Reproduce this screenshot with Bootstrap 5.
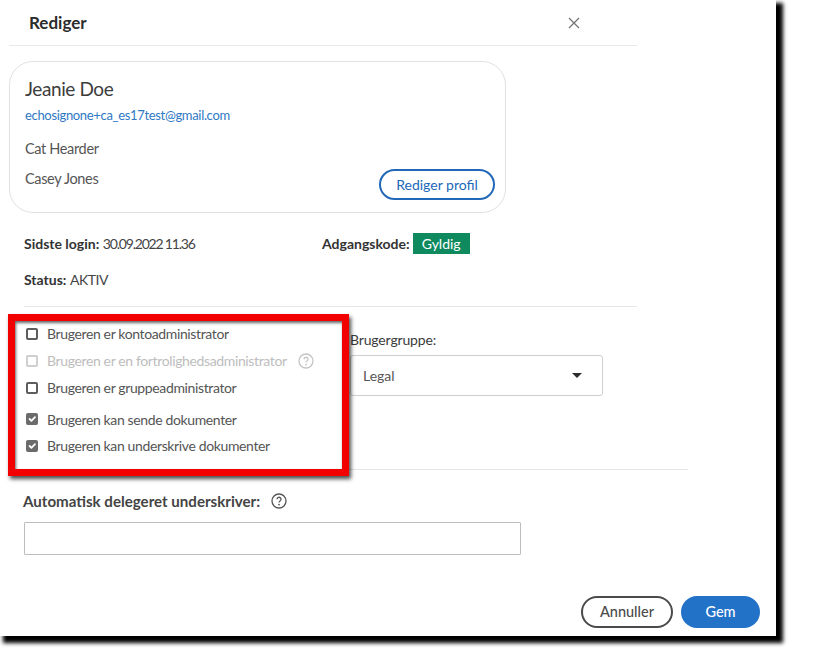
<!DOCTYPE html>
<html lang="da">
<head>
  <meta charset="UTF-8">
  <meta name="viewport" content="width=device-width, initial-scale=1.0">
  <title>Rediger</title>
  <link href="https://cdn.jsdelivr.net/npm/bootstrap@5.3.0/dist/css/bootstrap.min.css" rel="stylesheet">
  <style>
    body {
      background: #fff;
      color: #4b4b4b;
      font-family: "Lato", "Open Sans", sans-serif;
      font-size: 14px;
      min-height: 649px;
    }
    .edit-window {
      position: relative;
      width: 776px;
      height: 636px;
      background: #fff;
      box-shadow: 5px 5px 4px 2px #000;
    }
    .edit-head {
      width: 628px;
      height: 46px;
      margin-left: 9px;
      padding: 0 57px 0 20px;
      border-bottom: 1px solid #e9e9e9;
    }
    .edit-title {
      font-size: 17px;
      font-weight: 700;
      color: #2c2c2c;
    }
    .profile-box {
      width: 497px;
      height: 152px;
      margin: 15px 0 0 9px;
      padding: 15px 10px 12px 15px;
      border: 1px solid #e1e1e1;
      border-radius: 24px;
    }
    .profile-name {
      font-size: 19px;
      line-height: 24px;
      color: #3c3c3c;
      letter-spacing: -0.4px;
    }
    .profile-mail {
      font-size: 13px;
      line-height: 18px;
      margin-top: 5px;
      color: #2f79c4;
      letter-spacing: -0.33px;
    }
    .profile-line {
      font-size: 14.5px;
      line-height: 20px;
      margin-top: 15px;
      color: #555;
      letter-spacing: -0.35px;
    }
    .profile-line + .profile-line { margin-top: 10px; }
    .btn.btn-profile {
      width: 116px;
      height: 31px;
      padding: 0;
      font-size: 14px;
      color: #2168b8;
      border: 2px solid #2168b8;
      background: #fff;
    }
    .info-row {
      margin-left: 24px;
      line-height: 20px;
      color: #444;
    }
    .info-row b { color: #333; }
    .info-top { height: 20px; margin-top: 21px; }
    .info-status { margin-top: 16px; }
    .info-value { letter-spacing: -0.5px; }
    .info-date { letter-spacing: -1.2px; }
    .info-left { width: 298px; }
    .pass-badge {
      width: 57px;
      height: 21px;
      margin: 0 0 2px 3px;
      background: #0f8a5f;
      color: #fff;
      font-size: 14px;
      font-weight: 400;
      line-height: 21px;
      padding: 0;
      border-radius: 0;
    }
    .rule-a {
      width: 613px;
      height: 1px;
      margin: 16px 0 0 24px;
      background: #e6e6e6;
    }
    .perm-row {
      height: 155px;
      margin-top: 7px;
    }
    .perm-col {
      width: 324px;
      margin-left: 26px;
      padding-top: 6px;
    }
    .perm-item {
      min-height: 0;
      height: 27px;
      margin: 0;
      padding: 0;
      display: flex;
      align-items: center;
      gap: 9px;
      color: #555;
      letter-spacing: -0.37px;
    }
    .perm-item.perm-gap { margin-top: 5px; height: 26px; }
    .perm-item .form-check-input {
      float: none;
      flex: none;
      width: 12px;
      height: 12px;
      margin: 0;
      border: 2px solid #5e5e5e;
      border-radius: 2px;
      background-color: #fff;
    }
    .perm-item .form-check-input:checked {
      background-color: #6b6b6b;
      border-width: 0;
      background-size: 12px 12px;
    }
    .perm-item .form-check-input:disabled {
      opacity: 1;
      border-color: #cfcfcf;
    }
    .perm-item .form-check-label {
      opacity: 1;
      color: #555;
    }
    .perm-item .form-check-input:disabled ~ .form-check-label {
      opacity: 1;
      color: #bdbdbd;
    }
    .help-dot { flex: none; margin-left: 2px; }
    .help-side { margin-left: 11px; }
    .group-col { padding-top: 17px; }
    .group-label {
      line-height: 18px;
      margin-bottom: 6px;
      color: #3c3c3c;
      letter-spacing: -0.15px;
    }
    .group-select {
      width: 253px;
      height: 41px;
      padding-left: 12px;
      padding-right: 20px;
      border: 1px solid #cfcfcf;
      border-radius: 3px;
      color: #555;
    }
    .caret-down {
      width: 0;
      height: 0;
      border-left: 5px solid transparent;
      border-right: 5px solid transparent;
      border-top: 5px solid #2c2c2c;
    }
    .mark-frame {
      position: absolute;
      left: 8px;
      top: 314px;
      width: 341px;
      height: 162px;
      border: 7px solid #f20000;
      box-shadow: 2px 3px 4px rgba(0, 0, 0, 0.7), inset 1px 2px 3px rgba(0, 0, 0, 0.6);
      pointer-events: none;
    }
    .rule-b {
      width: 665px;
      height: 1px;
      margin-left: 23px;
      background: #e6e6e6;
    }
    .delegate-wrap {
      margin: 21px 0 0 23px;
    }
    .delegate-label {
      font-size: 15.1px;
      font-weight: 700;
      line-height: 20px;
      color: #444;
    }
    .delegate-input {
      width: 497px;
      height: 33px;
      margin: 11px 0 0 1px;
      border: 1px solid #bdbdbd;
      border-radius: 1px;
    }
    .edit-foot {
      margin: 41px 16px 0 0;
      gap: 8px;
    }
    .btn.btn-cancel, .btn.btn-save {
      height: 32px;
      padding: 0;
      font-size: 14.5px;
      font-weight: 500;
    }
    .btn.btn-cancel {
      width: 92px;
      color: #4b4b4b;
      background: #fff;
      border: 2px solid #4b4b4b;
    }
    .btn.btn-save {
      width: 79px;
      color: #fff;
      background: #2272c8;
      border: 2px solid #2272c8;
    }
  </style>
</head>
<body>
  <div class="edit-window">
    <div class="edit-head d-flex align-items-center justify-content-between">
      <span class="edit-title">Rediger</span>
      <svg width="12" height="12" viewBox="0 0 12 12" aria-label="Luk"><path d="M1 1l10 10M11 1L1 11" stroke="#707070" stroke-width="1.2" fill="none"/></svg>
    </div>

    <div class="profile-box d-flex justify-content-between">
      <div>
        <div class="profile-name">Jeanie Doe</div>
        <div class="profile-mail">echosignone+ca_es17test@gmail.com</div>
        <div class="profile-line">Cat Hearder</div>
        <div class="profile-line">Casey Jones</div>
      </div>
      <div class="d-flex align-items-end">
        <button type="button" class="btn btn-profile rounded-pill">Rediger profil</button>
      </div>
    </div>

    <div class="info-row info-top d-flex align-items-center">
      <div class="info-left"><b>Sidste login:</b> <span class="info-date">30.09.2022 11.36</span></div>
      <div class="d-flex align-items-center"><b>Adgangskode:</b><span class="badge pass-badge">Gyldig</span></div>
    </div>
    <div class="info-row info-status"><b>Status:</b> <span class="info-value">AKTIV</span></div>
    <div class="rule-a"></div>

    <div class="perm-row d-flex">
      <div class="perm-col">
        <div class="form-check perm-item">
          <input class="form-check-input" type="checkbox" id="chk1">
          <label class="form-check-label" for="chk1">Brugeren er kontoadministrator</label>
        </div>
        <div class="form-check perm-item">
          <input class="form-check-input" type="checkbox" id="chk2" disabled>
          <label class="form-check-label" for="chk2">Brugeren er en fortrolighedsadministrator</label>
          <svg class="help-dot" width="16" height="16" viewBox="0 0 16 16"><circle cx="8" cy="8" r="7" fill="none" stroke="#c4c4c4" stroke-width="1.3"/><path d="M6 6.3a2 2 0 1 1 3 1.7c-.7.4-1 .8-1 1.5" fill="none" stroke="#c4c4c4" stroke-width="1.3"/><circle cx="8" cy="11.6" r=".9" fill="#c4c4c4"/></svg>
        </div>
        <div class="form-check perm-item">
          <input class="form-check-input" type="checkbox" id="chk3">
          <label class="form-check-label" for="chk3">Brugeren er gruppeadministrator</label>
        </div>
        <div class="form-check perm-item perm-gap">
          <input class="form-check-input" type="checkbox" id="chk4" checked>
          <label class="form-check-label" for="chk4">Brugeren kan sende dokumenter</label>
        </div>
        <div class="form-check perm-item">
          <input class="form-check-input" type="checkbox" id="chk5" checked>
          <label class="form-check-label" for="chk5">Brugeren kan underskrive dokumenter</label>
        </div>
      </div>
      <div class="group-col">
        <div class="group-label">Brugergruppe:</div>
        <div class="group-select d-flex align-items-center justify-content-between">
          <span>Legal</span>
          <span class="caret-down"></span>
        </div>
      </div>
    </div>
    <div class="rule-b"></div>

    <div class="delegate-wrap">
      <div class="d-flex align-items-center delegate-label">
        Automatisk delegeret underskriver:
        <svg class="help-side" width="16" height="16" viewBox="0 0 16 16"><circle cx="8" cy="8" r="7" fill="none" stroke="#555" stroke-width="1.3"/><path d="M6 6.3a2 2 0 1 1 3 1.7c-.7.4-1 .8-1 1.5" fill="none" stroke="#555" stroke-width="1.3"/><circle cx="8" cy="11.6" r=".9" fill="#555"/></svg>
      </div>
      <input class="form-control delegate-input" type="text">
    </div>

    <div class="edit-foot d-flex justify-content-end">
      <button type="button" class="btn btn-cancel rounded-pill">Annuller</button>
      <button type="button" class="btn btn-save rounded-pill">Gem</button>
    </div>

    <div class="mark-frame"></div>
  </div>
  <script src="https://cdn.jsdelivr.net/npm/bootstrap@5.3.0/dist/js/bootstrap.bundle.min.js"></script>
</body>
</html>
